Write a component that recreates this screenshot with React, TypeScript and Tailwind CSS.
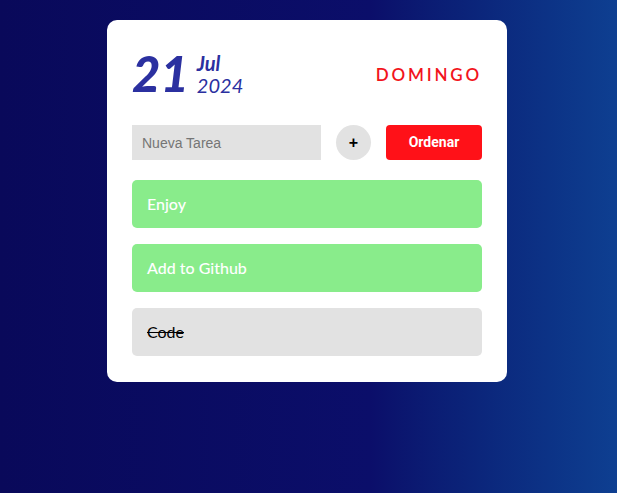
import { useState } from 'react';

type Task = { id: number; text: string; done: boolean };

const initialTasks: Task[] = [
  { id: 1, text: 'Enjoy', done: false },
  { id: 2, text: 'Add to Github', done: false },
  { id: 3, text: 'Code', done: true },
];

export default function App() {
  const [tasks, setTasks] = useState<Task[]>(initialTasks);
  const [value, setValue] = useState('');

  const addTask = () => {
    if (!value.trim()) return;
    setTasks([...tasks, { id: Date.now(), text: value, done: false }]);
    setValue('');
  };

  const toggle = (id: number) => {
    setTasks(tasks.map((t) => (t.id === id ? { ...t, done: !t.done } : t)));
  };

  const sortTasks = () => {
    setTasks([...tasks].sort((a, b) => Number(a.done) - Number(b.done)));
  };

  return (
    <div className="flex min-h-[493px] w-full items-start justify-center bg-gradient-to-r from-[#09095a] via-[#0b0e6a] via-60% to-[#0e3f91] pr-[3px] pt-[20px] font-['Lato','Noto_Sans',sans-serif]">
      <div className="w-[400px] rounded-[10px] bg-white px-[25px] pb-[26px] pt-[29px]">
        {/* fecha */}
        <div className="flex items-center justify-between">
          <div className="flex items-center text-[#2b30a0] italic">
            <span className="text-[49px] font-black leading-[48px]">21</span>
            <div className="ml-[8px] mt-[2px] flex flex-col leading-none">
              <span className="text-[20px] font-bold leading-[21px]">Jul</span>
              <span className="text-[20px] leading-[22px]">2024</span>
            </div>
          </div>
          <span className="mt-[4px] text-[17px] font-semibold tracking-[2.8px] text-[#f2141c]">DOMINGO</span>
        </div>

        {/* input */}
        <div className="mt-[28px] flex items-center gap-[15px]">
          <input
            value={value}
            onChange={(e) => setValue(e.target.value)}
            placeholder="Nueva Tarea"
            className="h-[35px] w-[189px] bg-[#e2e2e2] px-[10px] font-['Liberation_Sans',Arial,sans-serif] text-[14px] text-[#333] outline-none placeholder:text-[#757575]"
          />
          <button
            onClick={addTask}
            className="flex h-[35px] w-[35px] items-center justify-center rounded-full bg-[#e2e2e2] font-['Liberation_Sans',Arial,sans-serif] text-[16px] font-bold leading-none text-black"
          >
            +
          </button>
          <button
            onClick={sortTasks}
            className="h-[35px] w-[96px] rounded-[4px] bg-[#ff1118] font-['Roboto',sans-serif] text-[14px] font-bold text-white"
          >
            Ordenar
          </button>
        </div>

        {/* lista */}
        <div className="mt-[20px] flex flex-col gap-[16px]">
          {tasks.map((t) => (
            <div
              key={t.id}
              onClick={() => toggle(t.id)}
              className={
                t.done
                  ? 'flex h-[48px] cursor-pointer items-center rounded-[5px] bg-[#e2e2e2] px-[15px] text-[16px] text-black line-through'
                  : 'flex h-[48px] cursor-pointer items-center rounded-[5px] bg-[#89ec8b] px-[15px] text-[16px] font-medium text-white'
              }
            >
              {t.text}
            </div>
          ))}
        </div>
      </div>
    </div>
  );
}
